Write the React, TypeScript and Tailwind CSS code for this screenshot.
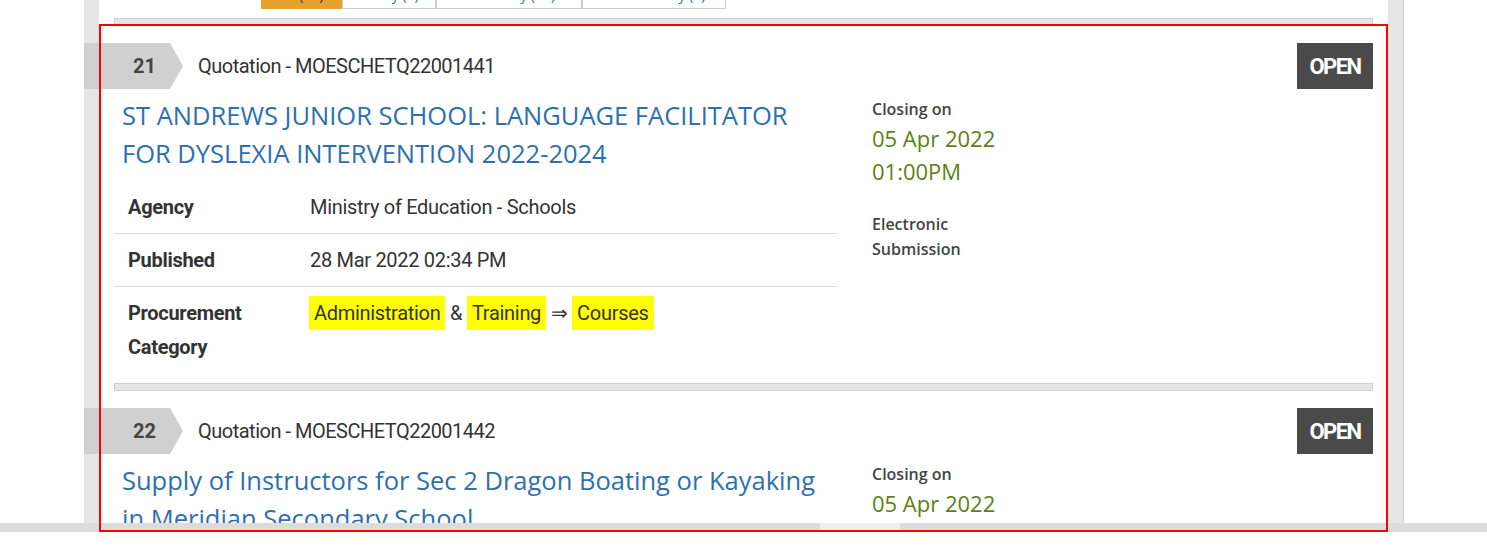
const tabs = [
  { label: "All (21)", w: "w-[81px]", active: true },
  { label: "Today (0)", w: "w-[94px]", active: false },
  { label: "Yesterday (10)", w: "w-[146px]", active: false },
  { label: "This Monday (5)", w: "w-[144px]", active: false },
]

type Tender = {
  no: number
  ref: string
  title: string
  agency: string
  published: string
  category: string[]
  date: string
  time: string
}

const tenders: Tender[] = [
  {
    no: 21,
    ref: "Quotation - MOESCHETQ22001441",
    title: "ST ANDREWS JUNIOR SCHOOL: LANGUAGE FACILITATOR FOR DYSLEXIA INTERVENTION 2022-2024",
    agency: "Ministry of Education - Schools",
    published: "28 Mar 2022 02:34 PM",
    category: ["Administration", "Training", "Courses"],
    date: "05 Apr 2022",
    time: "01:00PM",
  },
  {
    no: 22,
    ref: "Quotation - MOESCHETQ22001442",
    title: "Supply of Instructors for Sec 2 Dragon Boating or Kayaking in Meridian Secondary School",
    agency: "Ministry of Education - Schools",
    published: "28 Mar 2022 02:36 PM",
    category: ["Administration", "Training", "Courses"],
    date: "05 Apr 2022",
    time: "01:00PM",
  },
]

const Separator = ({ className }: { className?: string }) => (
  <div className={`h-[8px] bg-[#e6e6e6] border border-[#cfcfcf] ${className ?? ""}`} />
)

const TenderItem = ({ t }: { t: Tender }) => {
  return (
    <div>
      <div className="flex items-center h-[46px] mt-[17px]">
        <div className="-ml-[30px] flex h-[46px]">
          <div className="w-[86px] h-[46px] bg-[#d0d0d0] flex items-center justify-end pr-[14px] text-[20px] font-bold text-[#444]">
            {t.no}
          </div>
          <svg width="13" height="46" viewBox="0 0 13 46">
            <polygon points="0,0 13,23 0,46" fill="#d0d0d0" />
          </svg>
        </div>
        <span className="ml-[15px] text-[20px] tracking-[-0.5px] text-[#333]">{t.ref}</span>
        <div className="ml-auto w-[76px] h-[46px] bg-[#4a4a4a] text-white flex items-center justify-center text-[22px] font-bold tracking-[-1.5px]">
          OPEN
        </div>
      </div>

      <div className="flex mt-[7px]">
        <div className="w-[723px]">
          <h2 className="px-[8px] text-[25.5px] leading-[38px] text-[#2d70b1] font-['Open_Sans',sans-serif]">
            {t.title}
          </h2>
          <table className="mt-[9px] w-full text-[20px] leading-[34px] text-[#333] tracking-[-0.3px]">
            <tbody>
              <tr className="border-b border-[#dddddd]">
                <td className="w-[182px] pl-[14px] py-[9px] font-bold align-top">Agency</td>
                <td className="pl-[14px] py-[9px]">{t.agency}</td>
              </tr>
              <tr className="border-b border-[#dddddd]">
                <td className="w-[182px] pl-[14px] py-[9px] font-bold align-top">Published</td>
                <td className="pl-[14px] py-[9px]">{t.published}</td>
              </tr>
              <tr>
                <td className="w-[182px] pl-[14px] py-[9px] font-bold align-top">Procurement Category</td>
                <td className="pl-[13px] py-[9px] align-top">
                  <span className="inline-block bg-[#ffff00] px-[5px]">{t.category[0]}</span>{" "}
                  &amp;{" "}
                  <span className="inline-block bg-[#ffff00] px-[5px]">{t.category[1]}</span>{" "}
                  ⇒{" "}
                  <span className="inline-block bg-[#ffff00] px-[5px]">{t.category[2]}</span>
                </td>
              </tr>
            </tbody>
          </table>
        </div>
        <div className="ml-[35px] pt-[1px] font-['Open_Sans',sans-serif]">
          <p className="text-[16px] leading-[24px] font-semibold text-[#444]">Closing on</p>
          <p className="mt-[1px] text-[22px] leading-[33px] text-[#5e7f11]">{t.date}</p>
          <p className="text-[22px] leading-[33px] text-[#5e7f11]">{t.time}</p>
          <p className="mt-[24px] text-[16px] leading-[25px] font-semibold text-[#444]">
            Electronic
            <br />
            Submission
          </p>
        </div>
      </div>
      <Separator className="mt-[10px]" />
    </div>
  )
}

const App = () => {
  return (
    <div className="relative w-[1487px] h-[557px] bg-white overflow-hidden font-['Roboto',sans-serif]">
      <div className="relative h-[532px] overflow-hidden">
        <div className="ml-[84px] w-[1320px] h-full bg-[#e6e6e6] border-r border-[#cfcfcf] px-[15px]">
          <div className="w-[1289px] h-full bg-white px-[15px]">
            <div className="h-[9px] overflow-hidden">
              <div className="flex ml-[147px] -mt-[21px]">
                {tabs.map((tab, i) => (
                  <div
                    key={i}
                    className={`${tab.w} h-[30px] flex items-center justify-center text-[14px] font-['Open_Sans',sans-serif] border ${
                      tab.active
                        ? "bg-[#e6a12e] border-[#e6a12e] text-[#333]"
                        : "bg-white border-[#cccccc] text-[#2d70b1]"
                    }`}
                  >
                    {tab.label}
                  </div>
                ))}
              </div>
            </div>
            <Separator className="mt-[9px]" />
            {tenders.map((t) => (
              <TenderItem key={t.no} t={t} />
            ))}
          </div>
        </div>

        {/* horizontal scrollbar */}
        <div className="absolute left-0 right-0 bottom-0 h-[9px] bg-[#dcdcdc]">
          <div className="absolute left-[820px] w-[80px] h-full bg-[#efefef]" />
        </div>

        {/* highlight frame */}
        <div className="absolute left-[99px] top-[24px] w-[1289px] h-[508px] border-2 border-[#ff0000] pointer-events-none" />
      </div>
    </div>
  )
}

export default App
